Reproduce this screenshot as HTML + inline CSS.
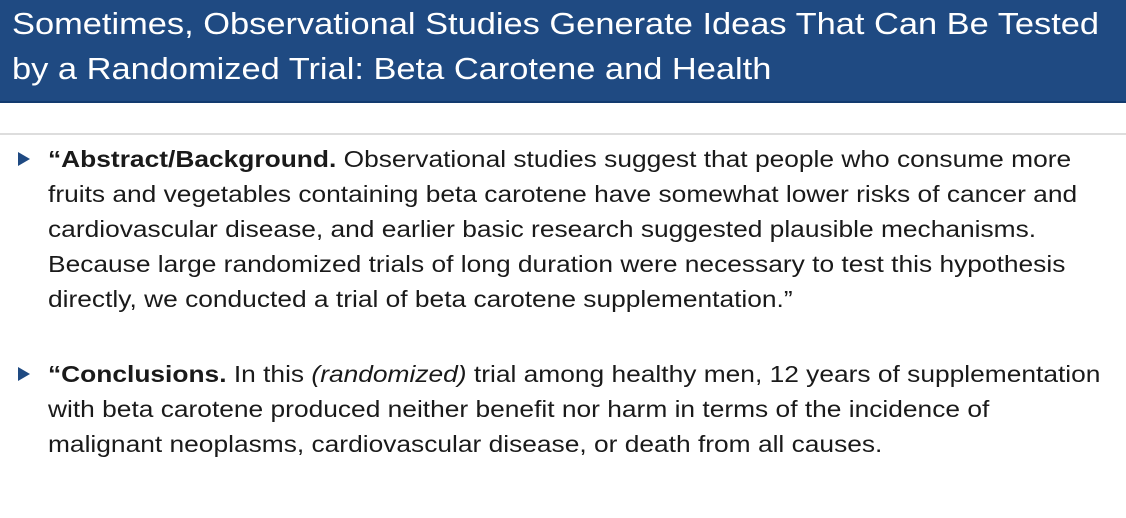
<!DOCTYPE html>
<html><head><style>
body{margin:0;width:1126px;height:518px;background:#fff;overflow:hidden;font-family:"Liberation Sans",sans-serif;position:relative}
.hd{position:absolute;left:0;top:0;width:1126px;height:101px;background:#1f4a82;border-bottom:2px solid #123a6e}
.t{position:absolute;left:12px;color:#fff;font-size:31px;white-space:nowrap;transform:scaleX(1.11);transform-origin:left}
.rule{position:absolute;left:0;top:133px;width:1126px;height:2px;background:#ddd}
.l{position:absolute;left:48px;font-size:23px;color:#1a1a1a;white-space:nowrap;transform:scaleX(1.145);transform-origin:left;line-height:28px}
.b{position:absolute;left:18px;width:0;height:0;border-top:7px solid transparent;border-bottom:7px solid transparent;border-left:12px solid #1f4a82}
</style></head><body>
<div class="hd"></div>
<div class="t" style="top:6px">Sometimes, Observational Studies Generate Ideas That Can Be Tested</div>
<div class="t" style="top:51px">by a Randomized Trial: Beta Carotene and Health</div>
<div class="rule"></div>
<div class="b" style="top:152px"></div>
<div class="l" style="top:145px"><b>“Abstract/Background.</b> Observational studies suggest that people who consume more</div>
<div class="l" style="top:180px">fruits and vegetables containing beta carotene have somewhat lower risks of cancer and</div>
<div class="l" style="top:215px">cardiovascular disease, and earlier basic research suggested plausible mechanisms.</div>
<div class="l" style="top:250px">Because large randomized trials of long duration were necessary to test this hypothesis</div>
<div class="l" style="top:285px">directly, we conducted a trial of beta carotene supplementation.”</div>
<div class="b" style="top:367px"></div>
<div class="l" style="top:360px"><b>“Conclusions.</b> In this <i>(randomized)</i> trial among healthy men, 12 years of supplementation</div>
<div class="l" style="top:395px">with beta carotene produced neither benefit nor harm in terms of the incidence of</div>
<div class="l" style="top:430px">malignant neoplasms, cardiovascular disease, or death from all causes.</div>
</body></html>
